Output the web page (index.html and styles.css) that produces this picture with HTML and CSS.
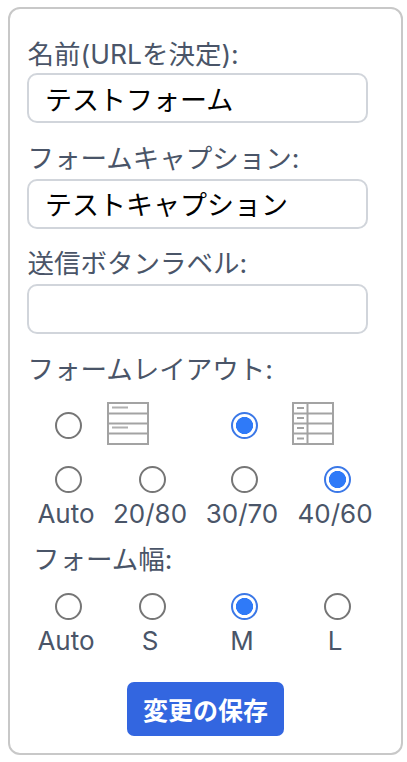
FILE: index.html
```html
<!DOCTYPE html>
<html lang="ja">
<head>
    <meta charset="UTF-8">
    <meta name="viewport" content="width=device-width, initial-scale=1.0">
    <title>フォーム設定</title>
    <link rel="stylesheet" href="styles.css">
</head>
<body>

<form class="panel">
    <div class="field">
        <label class="field-label">名前(URLを決定):</label>
        <input class="text-input" type="text" value="テストフォーム">
    </div>
    <div class="field">
        <label class="field-label">フォームキャプション:</label>
        <input class="text-input" type="text" value="テストキャプション">
    </div>
    <div class="field">
        <label class="field-label">送信ボタンラベル:</label>
        <input class="text-input" type="text" value="">
    </div>

    <div class="field-label">フォームレイアウト:</div>
    <div class="choice-grid layout-row">
        <input class="radio" type="radio" name="layout">
        <svg class="layout-icon" viewBox="0 0 42 43" width="42" height="43">
            <rect x="1" y="1" width="40" height="41" fill="#fff" stroke="#a3a3a3" stroke-width="2"/>
            <path d="M1 11.5H41M1 21.5H41M1 31.5H41" stroke="#a3a3a3" stroke-width="2" fill="none"/>
            <path d="M5 5.5H21M5 25.5H21" stroke="#b0b0b0" stroke-width="2" fill="none"/>
        </svg>
        <input class="radio" type="radio" name="layout" checked>
        <svg class="layout-icon layout-icon-split" viewBox="0 0 42 43" width="42" height="43">
            <rect x="1" y="1" width="40" height="41" fill="#fff" stroke="#a3a3a3" stroke-width="2"/>
            <path d="M1 11.5H41M1 21.5H41M1 31.5H41M15.5 1V42" stroke="#a3a3a3" stroke-width="2" fill="none"/>
            <path d="M5 6H12M5 16H12M5 26H12M5 36.5H12" stroke="#a3a3a3" stroke-width="2" fill="none"/>
        </svg>
    </div>

    <div class="choice-grid">
        <label class="choice"><input class="radio" type="radio" name="ratio">Auto</label>
        <label class="choice"><input class="radio" type="radio" name="ratio">20/80</label>
        <label class="choice"><input class="radio" type="radio" name="ratio">30/70</label>
        <label class="choice"><input class="radio" type="radio" name="ratio" checked>40/60</label>
    </div>

    <div class="field-label width-label">フォーム幅:</div>
    <div class="choice-grid">
        <label class="choice"><input class="radio" type="radio" name="width">Auto</label>
        <label class="choice"><input class="radio" type="radio" name="width">S</label>
        <label class="choice"><input class="radio" type="radio" name="width" checked>M</label>
        <label class="choice"><input class="radio" type="radio" name="width">L</label>
    </div>

    <div class="actions">
        <button class="save-button" type="button">変更の保存</button>
    </div>
</form>

</body>
</html>
```

FILE: styles.css
```css
body {
    font-family: Inter, "Noto Sans CJK JP", sans-serif;
    background-color: #fff;
    margin: 0;
    padding: 7px 4px 0 8px;
}
.panel {
    width: 395px;
    height: 748px;
    box-sizing: border-box;
    border: 2px solid #c8c8c8;
    border-radius: 12px;
    padding: 28px 17px 0 17px;
}
.field {
    margin-bottom: 17.5px;
}
.field:first-child .field-label {
    margin-bottom: 2px;
}
.field-label {
    display: block;
    font-size: 26.5px;
    line-height: 34px;
    margin-bottom: 4px;
    margin-left: 0.5px;
    color: #4a5568;
}
.text-input {
    display: block;
    width: 341px;
    height: 50px;
    box-sizing: border-box;
    border: 2px solid #d1d5db;
    border-radius: 10px;
    padding: 0 16px;
    font-family: inherit;
    font-size: 27px;
    color: #000;
    background: #fff;
}
.choice-grid {
    display: grid;
    grid-template-columns: 76px 92px 92px 94px;
    margin-left: 1px;
}
.layout-row {
    align-items: center;
    margin-top: 16px;
    margin-bottom: 21px;
}
.layout-row .radio {
    margin-top: 5px;
}
.layout-icon {
    margin-left: 3px;
}
.layout-icon-split {
    margin-left: 4px;
}
.choice {
    display: flex;
    flex-direction: column;
    align-items: center;
    gap: 6px;
    font-size: 26px;
    line-height: 30px;
    color: #4a5568;
}
.radio {
    appearance: none;
    width: 27px;
    height: 27px;
    margin: 0 0 0 4px;
    justify-self: center;
    border: 2px solid #767676;
    border-radius: 50%;
    background: #fff;
}
.radio:checked {
    border-color: #3b78e7;
    background: radial-gradient(circle, #2f7af8 0 8.3px, #fff 8.8px);
}
.width-label {
    margin: 13px 0 17px 6px;
}
.actions {
    display: flex;
    justify-content: center;
    margin-top: 26px;
}
.save-button {
    width: 157px;
    height: 54px;
    border: none;
    border-radius: 7px;
    background-color: #3366e0;
    color: #fff;
    font-family: inherit;
    font-size: 25px;
    font-weight: 700;
}
```
